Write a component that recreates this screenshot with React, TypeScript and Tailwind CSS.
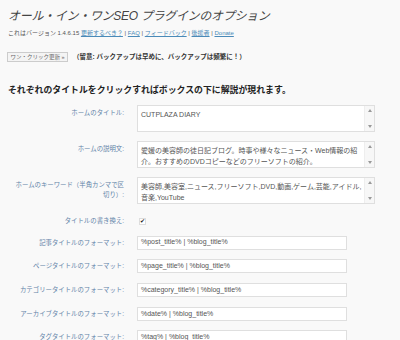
const jp = { fontFamily: '"Liberation Sans", "Noto Sans CJK JP", sans-serif' }

function Label({ children }: { children: React.ReactNode }) {
  return <div className="text-right text-[6.4px] leading-[10px] text-[#6283a8]">{children}</div>
}

function Area({ lines }: { lines: string[] }) {
  return (
    <div className="flex h-[27px] w-[238px] border border-[#dfdfdf] bg-white">
      <div className="flex-1 px-[3px] pt-[3px] text-[7px] leading-[11px] text-[#555]">
        {lines.map((l) => (
          <div key={l} className="whitespace-nowrap">{l}</div>
        ))}
      </div>
      <div className="flex w-[10px] flex-col justify-between border-l border-[#eee] bg-[#f7f7f7] py-[3px]">
        <div className="mx-auto h-0 w-0 border-x-[2.5px] border-b-[3px] border-x-transparent border-b-[#999]" />
        <div className="mx-auto h-0 w-0 border-x-[2.5px] border-t-[3px] border-x-transparent border-t-[#999]" />
      </div>
    </div>
  )
}

function Field({ value }: { value: string }) {
  return (
    <div className="flex h-[14px] w-[210px] items-center border border-[#dfdfdf] bg-white px-[3px] text-[7px] text-[#555]">
      {value}
    </div>
  )
}

const formats = [
  ['記事タイトルのフォーマット:', '%post_title% | %blog_title%'],
  ['ページタイトルのフォーマット:', '%page_title% | %blog_title%'],
  ['カテゴリータイトルのフォーマット:', '%category_title% | %blog_title%'],
  ['アーカイブタイトルのフォーマット:', '%date% | %blog_title%'],
  ['タグタイトルのフォーマット:', '%tag% | %blog_title%'],
]

export default function App() {
  return (
    <div className="h-[340px] w-[400px] overflow-hidden bg-[#f9f9f9] px-2" style={jp}>
      {/* page title */}
      <h1 className="pt-[6px] text-[12px] font-normal italic leading-[20px] tracking-[-0.3px] text-[#444]">
        オール・イン・ワンSEO プラグインのオプション
      </h1>

      <p className="mt-[2px] text-[6px] leading-[10px] text-[#555]">
        これはバージョン 1.4.6.15{' '}
        <a className="text-[#4a8ab8] underline">更新するべき？</a> |{' '}
        <a className="text-[#4a8ab8] underline">FAQ</a> |{' '}
        <a className="text-[#4a8ab8] underline">フィードバック</a> |{' '}
        <a className="text-[#4a8ab8] underline">後援者</a> |{' '}
        <a className="text-[#4a8ab8] underline">Donate</a>
      </p>

      <div className="mt-[14px] flex items-center gap-[5px]">
        <button className="-ml-px h-[10px] w-[61px] border border-[#ccc] bg-[#f4f4f4] text-[5.5px] leading-[8px] text-[#666]">
          ワン・クリック更新 »
        </button>
        <span className="text-[6.5px] font-bold text-[#333]">
          （留意: バックアップは早めに、バックアップは頻繁に！）
        </span>
      </div>

      <h2 className="mt-[22px] text-[8.9px] font-bold leading-[12px] text-[#222]">
        それぞれのタイトルをクリックすればボックスの下に解説が現れます。
      </h2>

      {/* options form */}
      <div className="mt-[9px] grid grid-cols-[116px_1fr] gap-x-[13px]">
        <div className="pt-[3px]"><Label>ホームのタイトル:</Label></div>
        <Area lines={['CUTPLAZA DIARY']} />

        <div className="mt-[9px] pt-[3px]"><Label>ホームの説明文:</Label></div>
        <div className="mt-[9px]">
          <Area
            lines={[
              '愛媛の美容師の徒日記ブログ。時事や様々なニュース・Web情報の紹',
              '介。おすすめのDVDコピーなどのフリーソフトの紹介。',
            ]}
          />
        </div>

        <div className="mt-[9px] pt-[3px]">
          <Label>
            ホームのキーワード（半角カンマで区
            <br />
            切り）:
          </Label>
        </div>
        <div className="mt-[9px]">
          <Area
            lines={['美容師,美容室,ニュース,フリーソフト,DVD,動画,ゲーム,芸能,アイドル,', '音楽,YouTube']}
          />
        </div>

        <div className="mt-[12px]"><Label>タイトルの書き換え:</Label></div>
        <div className="mt-[12px] flex h-[10px] items-center">
          <div className="ml-[2px] flex h-[7px] w-[7px] items-center justify-center border border-[#ddd] bg-white text-[6px] leading-none text-[#222]">
            ✔
          </div>
        </div>

        {formats.map(([label, value]) => (
          <div key={label} className="contents">
            <div className="mt-[9.7px] pt-[2px]">
              <Label>{label}</Label>
            </div>
            <div className="mt-[9.7px]">
              <Field value={value} />
            </div>
          </div>
        ))}
      </div>
    </div>
  )
}
